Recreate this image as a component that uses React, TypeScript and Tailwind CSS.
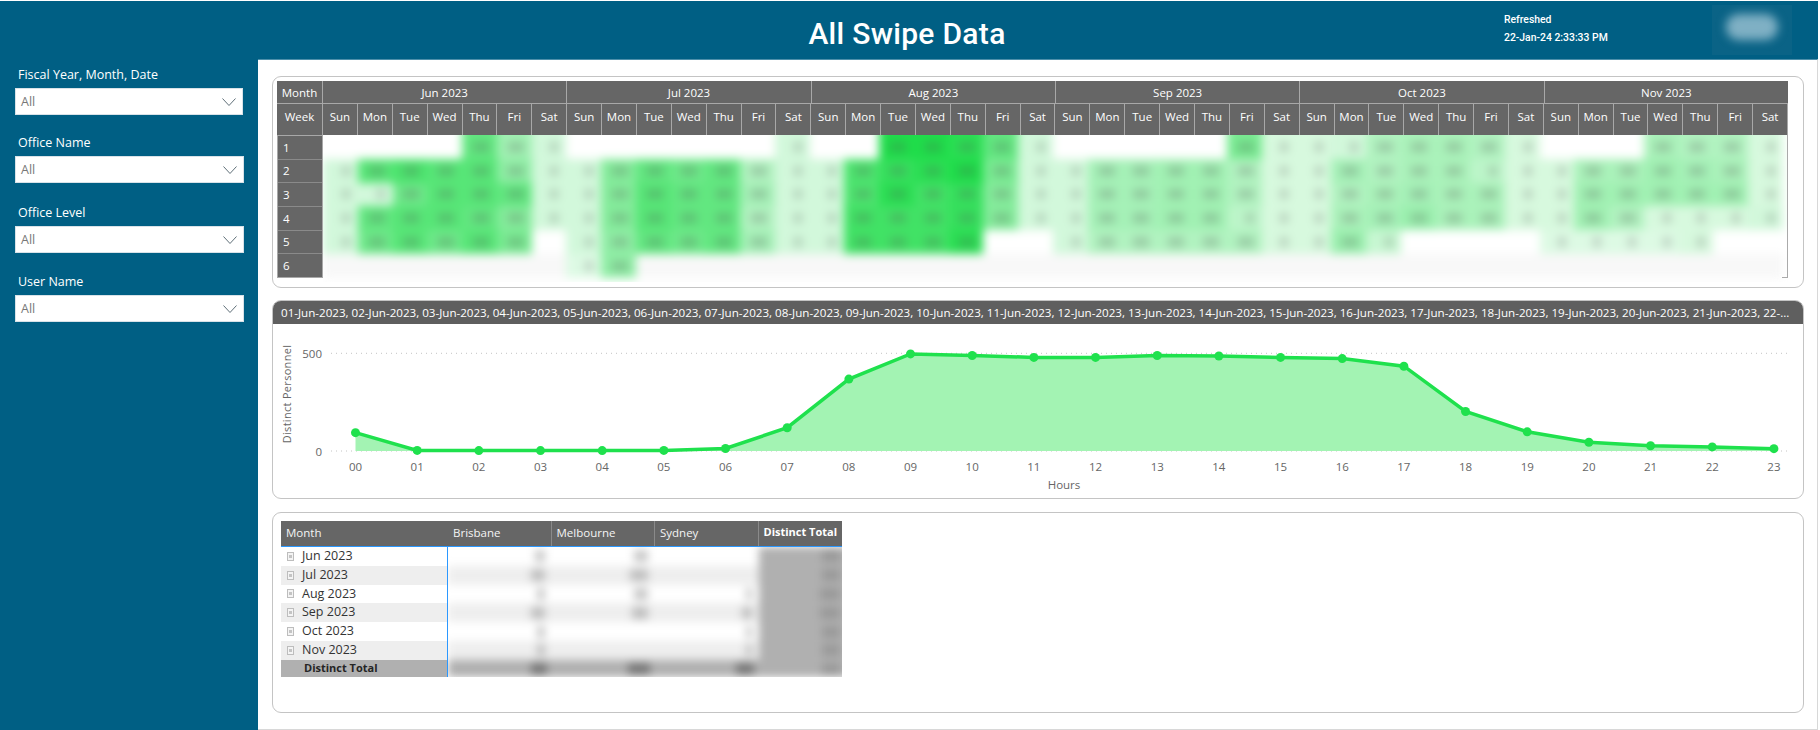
import React from "react";

const months = ["Jun 2023", "Jul 2023", "Aug 2023", "Sep 2023", "Oct 2023", "Nov 2023"];
const days = ["Sun", "Mon", "Tue", "Wed", "Thu", "Fri", "Sat"];
const heat: number[][][] = [
  [
    [0, 0, 0, 0, 0.7, 0.42, 0.2],
    [0.2, 0.75, 0.8, 0.75, 0.75, 0.5, 0.2],
    [0.2, 0.2, 0.65, 0.75, 0.75, 0.7, 0.2],
    [0.2, 0.7, 0.75, 0.75, 0.7, 0.55, 0.2],
    [0.2, 0.65, 0.75, 0.65, 0.75, 0.6, 0],
    [0.02, 0.02, 0.02, 0.02, 0.02, 0.02, 0.02],
  ],
  [
    [0, 0, 0, 0, 0, 0, 0.2],
    [0.2, 0.55, 0.7, 0.65, 0.7, 0.35, 0.2],
    [0.2, 0.55, 0.75, 0.7, 0.7, 0.4, 0.2],
    [0.2, 0.55, 0.75, 0.7, 0.7, 0.35, 0.2],
    [0.2, 0.5, 0.7, 0.65, 0.7, 0.4, 0.2],
    [0.15, 0.5, 0, 0, 0, 0, 0],
  ],
  [
    [0, 0, 1, 1, 0.95, 0.7, 0.2],
    [0.2, 0.8, 0.9, 0.95, 1, 0.6, 0.2],
    [0.2, 0.8, 0.95, 0.85, 0.9, 0.55, 0.2],
    [0.2, 0.85, 0.85, 0.85, 0.9, 0.55, 0.2],
    [0.2, 0.85, 0.85, 0.85, 0.95, 0, 0],
    [0, 0, 0, 0, 0, 0, 0],
  ],
  [
    [0, 0, 0, 0, 0, 0.6, 0.18],
    [0.2, 0.4, 0.4, 0.42, 0.42, 0.35, 0.18],
    [0.2, 0.4, 0.4, 0.42, 0.42, 0.35, 0.18],
    [0.2, 0.4, 0.4, 0.42, 0.42, 0.3, 0.18],
    [0.2, 0.35, 0.35, 0.35, 0.35, 0.35, 0.18],
    [0, 0, 0, 0, 0, 0, 0],
  ],
  [
    [0.18, 0.2, 0.35, 0.38, 0.38, 0.35, 0.18],
    [0.18, 0.4, 0.35, 0.38, 0.38, 0.3, 0.18],
    [0.18, 0.35, 0.38, 0.4, 0.38, 0.38, 0.18],
    [0.18, 0.38, 0.4, 0.45, 0.38, 0.38, 0.18],
    [0.18, 0.45, 0.25, 0, 0, 0, 0],
    [0, 0, 0, 0, 0, 0, 0],
  ],
  [
    [0, 0, 0, 0.38, 0.35, 0.35, 0.18],
    [0.18, 0.38, 0.38, 0.42, 0.4, 0.38, 0.18],
    [0.18, 0.42, 0.42, 0.42, 0.42, 0.42, 0.18],
    [0.18, 0.42, 0.35, 0.18, 0.18, 0.18, 0.2],
    [0.15, 0.15, 0.15, 0.15, 0.18, 0, 0],
    [0, 0, 0, 0, 0, 0, 0],
  ],
];

const mix = (v: number) =>
  `rgb(${Math.round(255 - v * 224)},${Math.round(255 - v * 34)},${Math.round(255 - v * 181)})`;

const values = [94, 3, 2, 2, 2, 3, 13, 119, 368, 497, 489, 479, 479, 489, 486, 479, 473, 434, 202, 98, 45, 27, 21, 12];
const x0 = 82.5;
const step = 61.67;
const px = (i: number) => x0 + i * step;
const py = (v: number) => 127 - (v / 500) * 97.7;
const pts = values.map((v, i) => `${px(i)},${py(v)}`).join(" ");
const dates =
  Array.from({ length: 21 }, (_, i) => `${String(i + 1).padStart(2, "0")}-Jun-2023`).join(", ") + ", 22-...";

function Slicer({ label, className, wide }: { label: string; className: string; wide?: boolean }) {
  return (
    <div className={className}>
      <div className="h-[21px] pl-[18px] text-[12.5px] leading-[21px] text-white">{label}</div>
      <div
        className={`mt-[3px] ml-[15px] flex h-[27px] items-center justify-between border border-[#d8e2e8] bg-white pl-[5px] pr-[6px] text-[12.5px] text-[#777777] ${
          wide ? "w-[229px]" : "w-[228px]"
        }`}
      >
        <span className="pt-[2px]">All</span>
        <svg width="14" height="8" viewBox="0 0 14 8" fill="none" stroke="#5f6f78" strokeWidth="1">
          <path d="M0.5 0.5 L7 7.5 L13.5 0.5" />
        </svg>
      </div>
    </div>
  );
}

function Heatmap() {
  return (
    <div className="flex h-[201px] w-[1511px] flex-col text-[11.5px] text-white">
      <div className="flex h-[23px] bg-[#666666]">
        <div className="flex w-[46px] items-center justify-center border-r border-b border-[#a8a8a8] pt-[1px]">Month</div>
        <div className="flex flex-1">
          {months.map((m) => (
            <div key={m} className="flex flex-1 items-center justify-center border-r border-b border-[#a8a8a8] pt-[1px] last:border-r-0">
              {m}
            </div>
          ))}
        </div>
      </div>
      <div className="flex h-[31px] bg-[#666666]">
        <div className="flex w-[46px] items-start justify-center border-r border-[#a8a8a8] pt-[4px]">Week</div>
        <div className="flex flex-1">
          {months.map((m) => (
            <div key={m} className="flex flex-1">
              {days.map((d) => (
                <div key={d} className="flex flex-1 items-start justify-center border-r border-[#a8a8a8] pt-[4px]">
                  {d}
                </div>
              ))}
            </div>
          ))}
        </div>
      </div>
      <div className="flex">
        <div className="flex h-[143px] w-[46px] flex-col border-x border-b border-[#a8a8a8] bg-[#666666]">
          {[1, 2, 3, 4, 5, 6].map((w) => (
            <div key={w} className="flex flex-1 items-center border-t border-[#8a8a8a] pl-[5px] first:border-[#a8a8a8]">
              {w}
            </div>
          ))}
        </div>
        <div className="relative h-[147px] flex-1 overflow-hidden">
          <div className="-mt-[10px] flex w-[1460px] blur-[5px]">
            {heat.map((month, mi) => (
              <div key={mi} className="flex flex-1">
                {days.map((_, di) => (
                  <div key={di} className="flex flex-1 flex-col">
                    {month.map((week, wi) => (
                      <div
                        key={wi}
                        className="flex h-[23.8px] items-center justify-end pr-[8px] first:h-[33.8px] first:pt-[10px]"
                        style={{ background: wi === 5 && week[di] < 0.1 ? "#f8f8f8" : mix(week[di]) }}
                      >
                        {week[di] > 0.1 && (
                          <div
                            className="h-[10px] bg-[#555555]/25"
                            style={{ width: week[di] > 0.3 ? 16 : 8 }}
                          />
                        )}
                      </div>
                    ))}
                  </div>
                ))}
              </div>
            ))}
          </div>
          <div className="absolute top-0 right-0 h-[143px] w-[6px] border-r border-b border-[#aaaaaa]" />
        </div>
      </div>
    </div>
  );
}

function Chart() {
  return (
    <svg width="1530" height="173" viewBox="0 0 1530 173" className="block">
      {[29.3, 127].map((y) => (
        <line key={y} x1="58" x2="1516" y1={y} y2={y} stroke="#c4c4c4" strokeWidth="1" strokeDasharray="1 4" />
      ))}
      <polygon points={`${px(0)},127 ${pts} ${px(23)},127`} fill="#a3f3b3" />
      <polyline points={pts} fill="none" stroke="#1fe14d" strokeWidth="3.5" />
      {values.map((v, i) => (
        <circle key={i} cx={px(i)} cy={py(v)} r="4.5" fill="#1fe14d" />
      ))}
      <text x="49" y="33.5" textAnchor="end" fontSize="11.5" fill="#666666">500</text>
      <text x="49" y="131.5" textAnchor="end" fontSize="11.5" fill="#666666">0</text>
      <text transform="translate(18,70) rotate(-90)" textAnchor="middle" fontSize="11" letterSpacing="0.3" fill="#666666">
        Distinct Personnel
      </text>
      {values.map((_, i) => (
        <text key={i} x={px(i)} y="147" textAnchor="middle" fontSize="11.5" fill="#666666">
          {String(i).padStart(2, "0")}
        </text>
      ))}
      <text x="791" y="165" textAnchor="middle" fontSize="11.5" fill="#666666">Hours</text>
    </svg>
  );
}

const rows = ["Jun 2023", "Jul 2023", "Aug 2023", "Sep 2023", "Oct 2023", "Nov 2023"];
const blobs = [
  [10, 14, 0, 18],
  [14, 18, 0, 18],
  [8, 14, 6, 20],
  [14, 16, 10, 20],
  [8, 0, 6, 18],
  [8, 0, 6, 18],
];

function Blob({ w, dark }: { w: number; dark?: boolean }) {
  return w ? (
    <div className={`h-[12px] ${dark ? "bg-[#555555]/60" : "bg-[#777777]/40"}`} style={{ width: w }} />
  ) : null;
}

function Matrix() {
  return (
    <div className="w-[561px] text-[11.5px]">
      <div className="flex h-[26px] border-b border-[#2b98ff] bg-[#666666] text-[#f4f4f4]">
        <div className="w-[167px] pl-[5px] pt-[3px]">Month</div>
        {["Brisbane", "Melbourne", "Sydney"].map((c) => (
          <div key={c} className="w-[103.5px] border-r border-[#8a8a8a] pl-[5px] pt-[3px]">{c}</div>
        ))}
        <div className="flex-1 pl-[5px] pt-[3px] text-[11px] font-bold text-white">Distinct Total</div>
      </div>
      <div className="flex">
        <div className="w-[167px] border-r border-[#2b98ff]">
          {rows.map((r, i) => (
            <div key={r} className={`flex h-[18.8px] items-center ${i % 2 ? "bg-[#eeeeee]" : "bg-white"}`}>
              <span className="ml-[6px] mr-[8px] flex h-[9px] w-[7px] items-center justify-center border border-[#bdbdbd] bg-[#f4f4f4]">
                <span className="h-[3px] w-[3px] bg-[#c4c4c4]" />
              </span>
              <span className="text-[12.5px] text-[#333333]">{r}</span>
            </div>
          ))}
          <div className="flex h-[17.5px] items-center bg-[#b0b0b0] pl-[23px] text-[11px] font-bold text-[#252525]">Distinct Total</div>
        </div>
        <div className="flex-1 overflow-hidden">
          <div className="-mr-[8px] blur-[4px]">
            {blobs.map((b, i) => (
              <div key={i} className={`flex h-[18.8px] ${i % 2 ? "bg-[#eeeeee]" : "bg-white"}`}>
                {b.slice(0, 3).map((w, j) => (
                  <div key={j} className="flex w-[103.5px] items-center justify-end pr-[7px]"><Blob w={w} /></div>
                ))}
                <div className="flex flex-1 items-center justify-end bg-[#b0b0b0] pr-[10px]"><Blob w={b[3]} /></div>
              </div>
            ))}
            <div className="flex h-[17.5px] bg-[#b0b0b0]">
              {[16, 22, 18].map((w, j) => (
                <div key={j} className="flex w-[103.5px] items-center justify-end pr-[5px]"><Blob w={w} dark /></div>
              ))}
              <div className="flex flex-1 items-center justify-end pr-[10px]"><Blob w={18} /></div>
            </div>
          </div>
        </div>
      </div>
    </div>
  );
}

export default function App() {
  return (
    <div className="flex h-[730px] w-[1820px] flex-col overflow-hidden bg-white pt-px" style={{ fontFamily: "'Open Sans', sans-serif" }}>
      <header className="relative flex h-[58px] w-[1818px] shrink-0 items-center justify-center bg-[#005f84] pr-[4px] pt-[7px] text-white">
        <h1 className="text-[30px] font-medium leading-none tracking-[0.3px]" style={{ fontFamily: "Roboto, sans-serif" }}>
          All Swipe Data
        </h1>
        <div className="absolute top-[10px] left-[1504px] text-[10.4px] font-medium leading-[18px]" style={{ fontFamily: "Roboto, sans-serif" }}>
          <div>Refreshed</div>
          <div>22-Jan-24 2:33:33 PM</div>
        </div>
        <div className="absolute top-[4px] left-[1712px] h-[50px] w-[80px] bg-[#0a6386]">
          <div className="mx-auto mt-[9px] h-[26px] w-[52px] rounded-full bg-[#7fb0c4] blur-[5px]" />
        </div>
      </header>
      <div className="flex min-h-0 flex-1">
        <aside className="w-[258px] shrink-0 bg-[#005f84] pt-[5px]">
          <Slicer label="Fiscal Year, Month, Date" className="h-[68px]" />
          <Slicer label="Office Name" className="h-[70px]" wide />
          <Slicer label="Office Level" className="h-[69px]" wide />
          <Slicer label="User Name" className="h-[69px]" wide />
        </aside>
        <main className="flex w-[1560px] flex-col border-t border-r border-b border-t-[#4d8faa] border-r-[#d8d8d8] border-b-[#d8d8d8] pt-[16px] pl-[14px]">
          <section className="h-[212px] w-[1532px] rounded-[9px] border border-[#c4c4c4] pt-[4px] pl-[4px]">
            <Heatmap />
          </section>
          <section className="mt-[12px] h-[199px] w-[1532px] overflow-hidden rounded-[9px] border border-[#c4c4c4]">
            <div className="h-[23px] overflow-hidden whitespace-nowrap bg-[#5f5f5f] pl-[8px] text-[11.6px] leading-[23px] text-white">
              {dates}
            </div>
            <Chart />
          </section>
          <section className="mt-[13px] h-[201px] w-[1532px] rounded-[9px] border border-[#c4c4c4] pt-[8px] pl-[8px]">
            <Matrix />
          </section>
        </main>
      </div>
    </div>
  );
}
